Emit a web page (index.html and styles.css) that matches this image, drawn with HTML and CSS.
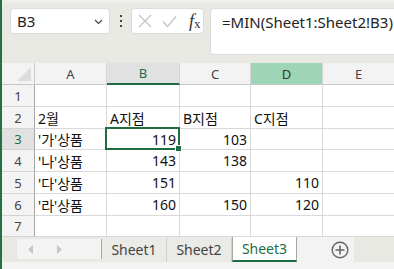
FILE: index.html
```html
<!DOCTYPE html>
<html lang="ko">
<head>
    <meta charset="UTF-8">
    <title>Excel - MIN</title>
    <link rel="stylesheet" href="styles.css">
</head>
<body>
    <div class="window">
        <div class="toolbar">
            <div class="name-box">
                <span>B3</span>
                <svg class="chevron" width="9" height="6" viewBox="0 0 9 6"><polyline points="1,1 4.5,4.5 8,1" fill="none" stroke="#444" stroke-width="1.2"/></svg>
            </div>
            <div class="dots"><i></i><i></i><i></i></div>
            <div class="fx-box">
                <svg width="14" height="14" viewBox="0 0 14 14"><path d="M1 1 L13 13 M13 1 L1 13" stroke="#c4c4c4" stroke-width="1.3" fill="none"/></svg>
                <svg width="15" height="13" viewBox="0 0 15 13"><polyline points="1,6.5 5.5,11.5 14,1.5" stroke="#c4c4c4" stroke-width="1.3" fill="none"/></svg>
                <span class="fx"><i>f</i><sub>x</sub></span>
            </div>
            <div class="formula">=MIN(Sheet1:Sheet2!B3)</div>
        </div>

        <div class="sheet">
            <div class="corner"></div>
            <div class="col-head">A</div>
            <div class="col-head active">B</div>
            <div class="col-head">C</div>
            <div class="col-head hover">D</div>
            <div class="col-head">E</div>

            <div class="row-head">1</div>
            <div class="cell"></div><div class="cell"></div><div class="cell"></div><div class="cell"></div><div class="cell"></div>

            <div class="row-head">2</div>
            <div class="cell">2월</div><div class="cell">A지점</div><div class="cell">B지점</div><div class="cell">C지점</div><div class="cell"></div>

            <div class="row-head active">3</div>
            <div class="cell">'가'상품</div><div class="cell num selected">119</div><div class="cell num">103</div><div class="cell"></div><div class="cell"></div>

            <div class="row-head">4</div>
            <div class="cell">'나'상품</div><div class="cell num">143</div><div class="cell num">138</div><div class="cell"></div><div class="cell"></div>

            <div class="row-head">5</div>
            <div class="cell">'다'상품</div><div class="cell num">151</div><div class="cell"></div><div class="cell num">110</div><div class="cell"></div>

            <div class="row-head">6</div>
            <div class="cell">'라'상품</div><div class="cell num">160</div><div class="cell num">150</div><div class="cell num">120</div><div class="cell"></div>

            <div class="row-head">7</div>
            <div class="cell"></div><div class="cell"></div><div class="cell"></div><div class="cell"></div><div class="cell"></div>
        </div>

        <div class="tabbar">
            <div class="tab-edge"></div>
            <div class="tab-nav">
                <svg width="6" height="9" viewBox="0 0 6 9"><polygon points="5,0 0,4.5 5,9" fill="#c6c6c6"/></svg>
                <svg width="6" height="9" viewBox="0 0 6 9"><polygon points="1,0 6,4.5 1,9" fill="#c6c6c6"/></svg>
            </div>
            <div class="tab">Sheet1</div>
            <div class="tab">Sheet2</div>
            <div class="tab current">Sheet3</div>
            <div class="tab-add">
                <svg width="18" height="18" viewBox="0 0 18 18"><circle cx="9" cy="9" r="7.8" fill="none" stroke="#666" stroke-width="1.4"/><path d="M9 4.5 V13.5 M4.5 9 H13.5" stroke="#666" stroke-width="1.6"/></svg>
            </div>
        </div>
        <div class="status"></div>
    </div>
</body>
</html>
```

FILE: styles.css
```css
* {
    margin: 0;
    padding: 0;
    box-sizing: border-box;
}

body {
    width: 394px;
    height: 269px;
    overflow: hidden;
    background: #e7e9e2;
    font-family: 'Noto Sans', 'Noto Sans CJK KR', sans-serif;
    color: #222;
}

.window {
    border-left: 2px solid #217346;
    height: 269px;
    overflow: hidden;
}

.toolbar {
    height: 63px;
    display: flex;
    align-items: flex-start;
    padding: 5px 0 0 8px;
    border-top: 3px solid #eeefea;
    width: 420px;
}

.name-box {
    width: 100px;
    height: 26px;
    background: white;
    border-radius: 4px;
    border: 1px solid #dcdcdc;
    display: flex;
    align-items: center;
    justify-content: space-between;
    padding: 0 6px;
    font-size: 15px;
    color: #222;
}

.chevron {
    margin-top: 1px;
}

.dots {
    width: 21px;
    height: 26px;
    display: flex;
    flex-direction: column;
    align-items: center;
    justify-content: center;
    gap: 3px;
}

.dots i {
    width: 2px;
    height: 2px;
    background: #444;
}

.fx-box {
    width: 73px;
    height: 26px;
    background: white;
    border-radius: 4px;
    border: 1px solid #dcdcdc;
    display: flex;
    align-items: center;
    gap: 10px;
    padding-left: 6px;
}

.fx {
    font-family: 'Liberation Serif', serif;
    font-size: 18px;
    color: #333;
    margin-left: 2px;
}

.fx sub {
    font-size: 13px;
    vertical-align: -1px;
}

.formula {
    margin-left: 6px;
    flex: 1;
    height: 47px;
    background: white;
    border-radius: 4px;
    border: 1px solid #dcdcdc;
    font-size: 15px;
    padding: 3px 0 0 11px;
    color: #222;
}

.sheet {
    display: grid;
    grid-template-columns: 33px 72px 73px 71px 72px 72px;
    grid-template-rows: 22px 22px 22px 21px 22px 22px 22px 21px;
    background: white;
    font-size: 14px;
}

.corner,
.col-head,
.row-head {
    background: #f3f3f3;
    color: #444;
    font-size: 13px;
    display: flex;
    align-items: center;
    justify-content: center;
}

.corner {
    border-right: 1px solid #c8c8c8;
    border-bottom: 1px solid #c8c8c8;
    position: relative;
}

.corner::after {
    content: "";
    position: absolute;
    right: 3px;
    bottom: 3px;
    border-style: solid;
    border-width: 0 0 14px 14px;
    border-color: transparent transparent #dcdcdc transparent;
}

.col-head {
    border-right: 1px solid #d4d4d4;
    border-bottom: 1px solid #c8c8c8;
}

.col-head.active {
    background: #e1e1e1;
    color: #1e6e42;
    border-bottom: 2px solid #1e6e42;
}

.col-head.hover {
    background: #9fd5b7;
    color: #333;
}

.row-head {
    border-right: 1px solid #a6a6a6;
    border-bottom: 1px solid #d4d4d4;
}

.row-head.active {
    background: #e1e1e1;
    color: #1e6e42;
}

.cell {
    border-right: 1px solid #d9d9d9;
    border-bottom: 1px solid #d9d9d9;
    padding: 0 3px;
    display: flex;
    align-items: center;
    white-space: nowrap;
    color: #111;
}

.cell.num {
    justify-content: flex-end;
}

.cell.selected {
    position: relative;
}

.cell.selected::before {
    content: "";
    position: absolute;
    left: -2px;
    top: -2px;
    right: -1px;
    bottom: -1px;
    border: 2px solid #1e6e42;
}

.cell.selected::after {
    content: "";
    position: absolute;
    right: -3px;
    bottom: -3px;
    width: 5px;
    height: 5px;
    background: #1e6e42;
    border: 1px solid white;
}

.tabbar {
    height: 25px;
    display: flex;
    background: #e7e9e2;
    font-size: 14px;
}

.tab-edge {
    width: 15px;
}

.tab-nav {
    width: 85px;
    background: #f3f3f3;
    border-right: 1px solid #a6a6a6;
    display: flex;
    align-items: center;
    gap: 22px;
    padding-left: 11px;
    margin: 2px 0 3px;
}

.tab {
    width: 65px;
    display: flex;
    align-items: center;
    justify-content: center;
    color: #444;
    background: #eaebe6;
    border-right: 1px solid #cfcfcf;
    padding-bottom: 1px;
}

.tab.current {
    background: white;
    color: #1e6e42;
    border: 1px solid #a6a6a6;
    border-top: none;
    border-bottom: 2px solid #1e6e42;
}

.tab-add {
    width: 57px;
    background: #f3f3f3;
    display: flex;
    align-items: center;
    justify-content: center;
    padding-left: 28px;
}

.status {
    height: 7px;
    background: #f3f3f3;
}
```
